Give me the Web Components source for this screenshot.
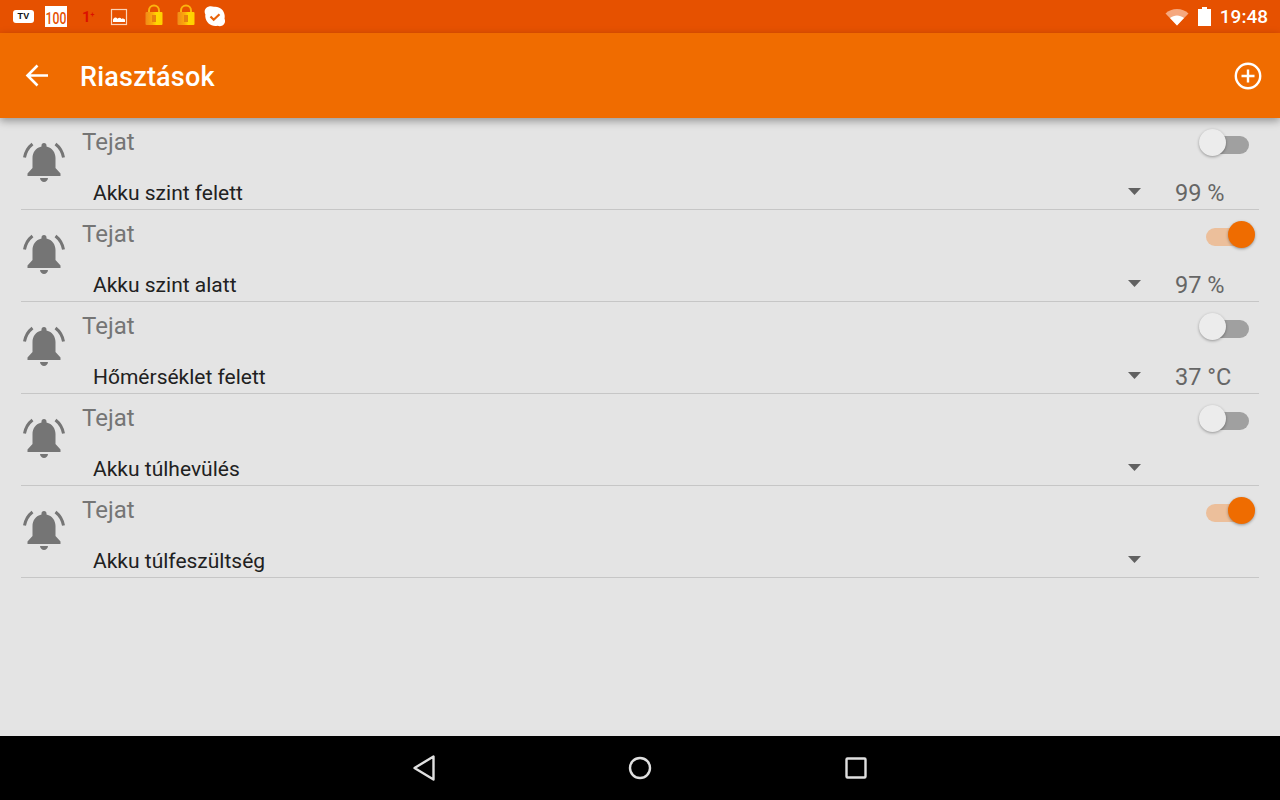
<!DOCTYPE html>
<html>
<head>
<meta charset="utf-8">
<title>Riasztások</title>
<style>
  html, body { margin: 0; height: 100%; }
  body {
    display: flex;
    flex-direction: column;
    height: 800px;
    overflow: hidden;
    background: #e4e4e4;
    font-family: Roboto, "Liberation Sans", sans-serif;
  }
</style>
</head>
<body>
  <status-bar></status-bar>
  <app-bar title="Riasztások"></app-bar>
  <alarm-list>
    <alarm-row label="Akku szint felett" value="99 %"></alarm-row>
    <alarm-row label="Akku szint alatt" value="97 %" on></alarm-row>
    <alarm-row label="Hőmérséklet felett" value="37 °C"></alarm-row>
    <alarm-row label="Akku túlhevülés"></alarm-row>
    <alarm-row label="Akku túlfeszültség" on></alarm-row>
  </alarm-list>
  <nav-bar></nav-bar>

<script>
  const lockIcon = (id) => `
    <svg width="20" height="22" viewBox="0 0 20 22">
      <defs>
        <linearGradient id="${id}" x1="0" x2="1" y1="0" y2="0">
          <stop offset="0" stop-color="#f08a18"/>
          <stop offset="0.4" stop-color="#fca80c"/>
          <stop offset="0.65" stop-color="#ffd800"/>
          <stop offset="1" stop-color="#ffd000"/>
        </linearGradient>
      </defs>
      <path d="M5 9V6.500a5 5 0 0 1 10 0V9" fill="none" stroke="#fbb30e" stroke-width="2"/>
      <rect x="1.500" y="8" width="17" height="13" rx="1" fill="url(#${id})"/>
      <rect x="8" y="11" width="4" height="7" fill="#e9820c"/>
    </svg>`;

  class StatusBar extends HTMLElement {
    constructor() {
      super();
      this.attachShadow({ mode: 'open' });
    }

    connectedCallback() {
      this.shadowRoot.innerHTML = `
        <style>
          :host {
            display: flex;
            align-items: center;
            justify-content: space-between;
            flex: none;
            height: 33px;
            background: #e65100;
            color: #fff;
          }
          .left { display: flex; align-items: center; margin-left: 13px; }
          .left > * { flex: none; }
          .right { display: flex; align-items: center; margin-right: 12px; }
          .tv {
            width: 21px; height: 13px; border-radius: 3px; background: #fff; color: #111;
            font: 700 9px/13px "Liberation Sans", sans-serif; text-align: center; letter-spacing: .3px;
            margin-right: 11px;
          }
          .cal {
            width: 22px; height: 21px; background: #fff; color: #e65100; margin-right: 15px;
            font: 500 17px/25px Roboto, sans-serif;
          }
          .cal span {
            display: block; width: 30px; margin-left: -4px; text-align: center;
            transform: scaleX(.72);
          }
          .one { width: 12px; color: #dc1000; font: 700 15px/16px Roboto, sans-serif; margin-right: 16px; text-align: left; }
          .one sup { font-size: 7px; line-height: 0; vertical-align: 5px; }
          .pic { margin-right: 16px; display: block; }
          .lock { margin-right: 12px; display: block; }
          .skype { display: block; margin-left: -5px; }
          .time { font: 500 19px/33px Roboto, sans-serif; margin-left: 9px; }
        </style>
        <div class="left">
          <div class="tv">TV</div>
          <div class="cal"><span>100</span></div>
          <div class="one">1<sup>+</sup></div>
          <svg class="pic" width="18" height="18" viewBox="0 0 18 18">
            <rect x="1.500" y="1.500" width="15" height="15" fill="none" stroke="#fbd3b8" stroke-width="1.200"/>
            <path d="M3 14v-2.500c1.500-2.500 3-2.500 4.500-.8 1.500-1.400 3-1.200 4 .3 1-.6 2-.6 3.500.5V14z" fill="#fff"/>
          </svg>
          <div class="lock">${lockIcon('l1')}</div>
          <div class="lock">${lockIcon('l2')}</div>
          <svg class="skype" width="24" height="24" viewBox="0 0 24 24">
            <path d="M6 1.500c2-.6 3.500 0 5 .3 5-.8 10.500 3 10.700 9 .1 1.200 0 2-.2 2.700 1 2.500.6 4.500-.8 6-1.500 1.600-3.700 2.200-6.200 1.200-6 1.200-11.500-2.700-12.200-9-.1-.8 0-1.500.1-2.200C.8 6 1.800 2.800 6 1.500z" fill="#fff"/>
            <path d="M7.500 11.500l3.200 3.200 5.800-5.400" fill="none" stroke="#e8630a" stroke-width="2.200"/>
          </svg>
        </div>
        <div class="right">
          <svg width="24" height="18" viewBox="0 0 24 18" style="margin-right:9px">
            <path d="M0.500 5.500C3.500 2.500 7.500 1 12 1s8.500 1.500 11.500 4.500L12 17.500z" fill="#f5a87f"/>
            <path d="M5 10c2-1.600 4.500-2.500 7-2.500s5 .9 7 2.500l-7 7.500z" fill="#fff"/>
          </svg>
          <svg width="13" height="19" viewBox="0 0 13 19">
            <path d="M4 0h5v2h4v17H0V2h4z" fill="#fff"/>
          </svg>
          <div class="time">19:48</div>
        </div>
      `;
    }
  }

  class AppBar extends HTMLElement {
    constructor() {
      super();
      this.attachShadow({ mode: 'open' });
    }

    connectedCallback() {
      this.shadowRoot.innerHTML = `
        <style>
          :host {
            display: flex;
            align-items: center;
            flex: none;
            position: relative;
            z-index: 1;
            height: 85px;
            background: #f06c00;
            color: #fff;
            box-shadow: 0 3px 8px rgba(0, 0, 0, 0.35);
          }
          .back { display: block; margin-left: 24px; }
          h1 { flex: 1; margin: 4px 0 0 29px; font: 500 27px/1 Roboto, sans-serif; letter-spacing: .2px; }
          .add { display: block; margin-right: 18px; }
        </style>
        <svg class="back" width="27" height="27" viewBox="0 0 27 27">
          <path d="M3.500 13.500H24M13.500 3.500l-10 10 10 10" fill="none" stroke="#fff" stroke-width="2.600"/>
        </svg>
        <h1>${this.getAttribute('title')}</h1>
        <svg class="add" width="28" height="28" viewBox="0 0 28 28">
          <circle cx="14" cy="14" r="12.200" fill="none" stroke="#fff" stroke-width="2.400"/>
          <path d="M14 7.500v13M7.500 14h13" stroke="#fff" stroke-width="2.400"/>
        </svg>
      `;
    }
  }

  class AlarmList extends HTMLElement {
    constructor() {
      super();
      this.attachShadow({ mode: 'open' });
    }

    connectedCallback() {
      this.shadowRoot.innerHTML = `
        <style>
          :host { display: block; flex: 1; padding: 0 21px; background: #e4e4e4; }
        </style>
        <slot></slot>
      `;
    }
  }

  class ToggleSwitch extends HTMLElement {
    constructor() {
      super();
      this.attachShadow({ mode: 'open' });
    }

    connectedCallback() {
      this.shadowRoot.innerHTML = `
        <style>
          :host { display: block; position: relative; width: 56px; height: 28px; }
          .track {
            position: absolute; left: 7px; top: 7px; width: 43px; height: 18px;
            border-radius: 9px; background: #a0a0a0;
          }
          .thumb {
            position: absolute; left: 0; top: 0; width: 27px; height: 27px; border-radius: 50%;
            background: #ececec; box-shadow: 0 1px 3px rgba(0, 0, 0, 0.35);
          }
          :host([on]) .track { background: #ecbf9b; }
          :host([on]) .thumb { left: 29px; background: #ef6c00; }
        </style>
        <div class="track"></div>
        <div class="thumb"></div>
      `;
    }
  }

  class AlarmRow extends HTMLElement {
    constructor() {
      super();
      this.attachShadow({ mode: 'open' });
    }

    connectedCallback() {
      const on = this.hasAttribute('on') ? 'on' : '';
      this.shadowRoot.innerHTML = `
        <style>
          :host {
            display: grid;
            grid-template-columns: 61px 1fr;
            grid-template-rows: 58px 33px;
            box-sizing: border-box;
            height: 92px;
            border-bottom: 1px solid #c6c6c6;
          }
          .bell { grid-row: 1 / 3; display: block; margin: 22px 0 0 0; }
          .top { display: flex; align-items: flex-start; justify-content: space-between; }
          .title { font-size: 24px; line-height: 48px; color: #757575; }
          toggle-switch { margin: 11px 4px 0 0; }
          .bottom { display: flex; align-items: center; }
          .label { flex: 1; margin-left: 11px; font-size: 21px; color: #212121; }
          .caret { display: block; margin: -2px 34px 0 0; }
          .value { width: 84px; font-size: 23.500px; color: #666; }
        </style>
        <svg class="bell" width="46" height="44" viewBox="0 0 46 44">
          <path d="M23 3c-1.600 0-2.500 1-2.500 2.500v.9C14.700 7.700 11.500 12.500 11.500 18v10L6.500 33.500V36h33v-2.500L34.500 28V18c0-5.500-3.200-10.300-9-11.600v-.9C25.500 4 24.600 3 23 3z" fill="#757575"/>
          <path d="M19 38h8c0 2-2 4-4 4s-4-2-4-4z" fill="#757575"/>
          <path d="M11.500 4C7 7.500 4.500 12 3.500 17.500M34.500 4C39 7.500 41.500 12 42.500 17.500" fill="none" stroke="#757575" stroke-width="3"/>
        </svg>
        <div class="top">
          <div class="title">Tejat</div>
          <toggle-switch ${on}></toggle-switch>
        </div>
        <div class="bottom">
          <div class="label">${this.getAttribute('label')}</div>
          <svg class="caret" width="13" height="7" viewBox="0 0 13 7"><path d="M0 0h13L6.500 7z" fill="#616161"/></svg>
          <div class="value">${this.getAttribute('value') || ''}</div>
        </div>
      `;
    }
  }

  class NavBar extends HTMLElement {
    constructor() {
      super();
      this.attachShadow({ mode: 'open' });
    }

    connectedCallback() {
      this.shadowRoot.innerHTML = `
        <style>
          :host {
            display: flex;
            align-items: center;
            justify-content: center;
            gap: 170px;
            flex: none;
            height: 64px;
            background: #000;
          }
          svg { display: block; width: 46px; height: 46px; }
        </style>
        <svg viewBox="0 0 46 46"><path d="M32.500 11.500v23L13.500 23z" fill="none" stroke="#e0e0e0" stroke-width="2.400" stroke-linejoin="round"/></svg>
        <svg viewBox="0 0 46 46"><circle cx="23" cy="23" r="10" fill="none" stroke="#e0e0e0" stroke-width="2.400"/></svg>
        <svg viewBox="0 0 46 46"><rect x="13.500" y="13.500" width="19" height="19" rx="1" fill="none" stroke="#e0e0e0" stroke-width="2.400"/></svg>
      `;
    }
  }

  customElements.define('status-bar', StatusBar);
  customElements.define('app-bar', AppBar);
  customElements.define('alarm-list', AlarmList);
  customElements.define('toggle-switch', ToggleSwitch);
  customElements.define('alarm-row', AlarmRow);
  customElements.define('nav-bar', NavBar);
</script>
</body>
</html>
